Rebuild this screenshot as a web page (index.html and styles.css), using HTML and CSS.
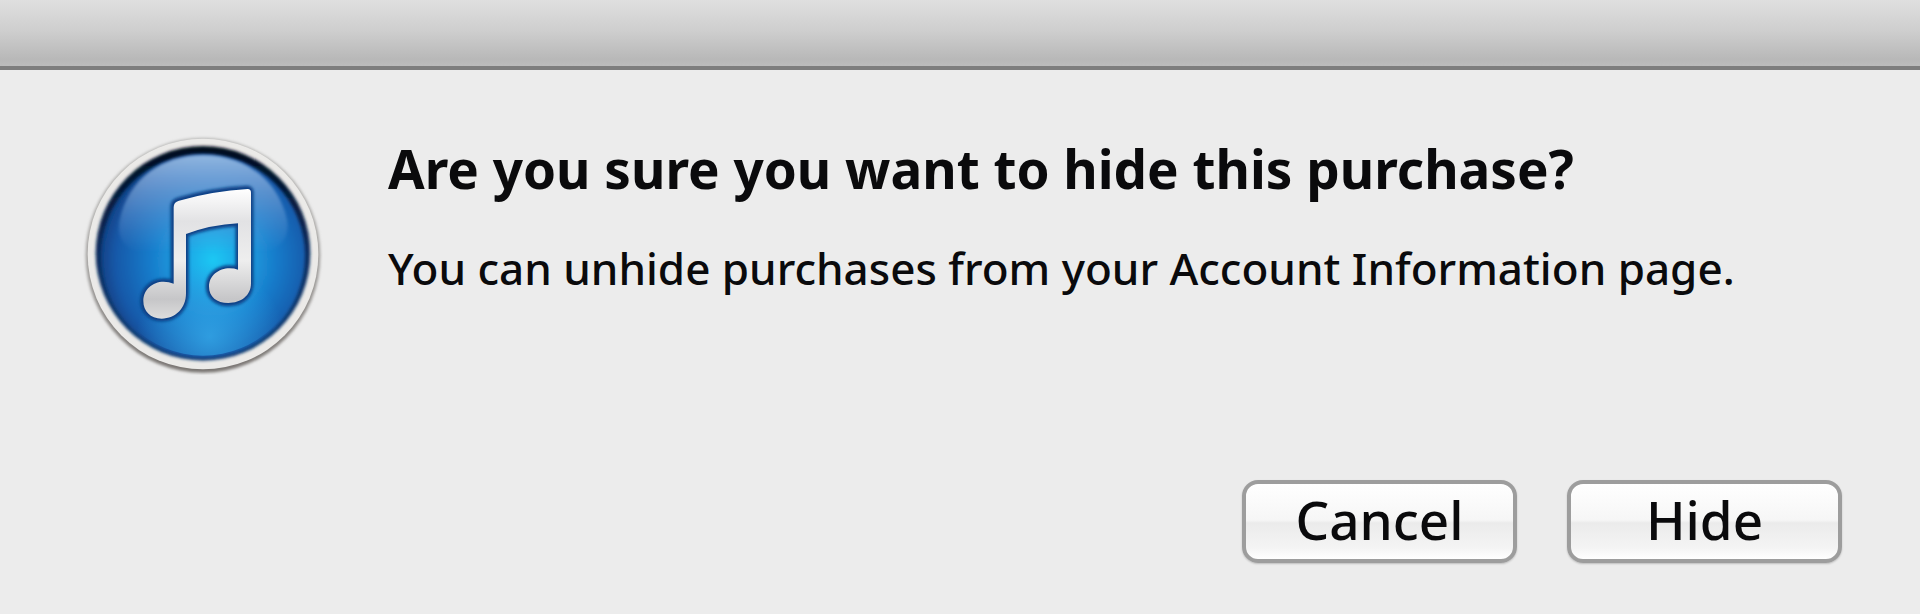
FILE: index.html
```
<!DOCTYPE html>
<html lang="en">
<head>
    <meta charset="UTF-8">
    <meta name="viewport" content="width=device-width, initial-scale=1.0">
    <title>Hide purchase</title>
    <link rel="stylesheet" href="styles.css">
</head>
<body>
    <header class="titlebar"></header>

    <main class="dialog">
        <div class="message">
            <svg class="app-icon" viewBox="40 45 720 720" aria-hidden="true">
                <defs>
                    <linearGradient id="rim" x1="0" y1="0" x2="0" y2="1">
                        <stop offset="0" stop-color="#b4b4b2"/>
                        <stop offset="0.5" stop-color="#a3a19f"/>
                        <stop offset="1" stop-color="#777370"/>
                    </linearGradient>
                    <radialGradient id="disc" cx="430" cy="420" r="345" gradientUnits="userSpaceOnUse">
                        <stop offset="0" stop-color="#1fc8f4"/>
                        <stop offset="0.25" stop-color="#1ea5e4"/>
                        <stop offset="0.55" stop-color="#187bca"/>
                        <stop offset="0.85" stop-color="#1658a8"/>
                        <stop offset="1" stop-color="#0f3e80"/>
                    </radialGradient>
                    <radialGradient id="glow" cx="420" cy="650" r="220" gradientUnits="userSpaceOnUse">
                        <stop offset="0" stop-color="#35a8e8" stop-opacity="0.8"/>
                        <stop offset="1" stop-color="#35a8e8" stop-opacity="0"/>
                    </radialGradient>
                    <linearGradient id="edge" x1="0" y1="0" x2="0" y2="1">
                        <stop offset="0" stop-color="#020b1c"/>
                        <stop offset="0.5" stop-color="#0b2d60"/>
                        <stop offset="1" stop-color="#123f75"/>
                    </linearGradient>
                    <linearGradient id="gloss" x1="0" y1="0" x2="0" y2="1">
                        <stop offset="0" stop-color="#a5c8ec" stop-opacity="0.85"/>
                        <stop offset="0.3" stop-color="#86aede" stop-opacity="0.7"/>
                        <stop offset="1" stop-color="#6fa5e0" stop-opacity="0"/>
                    </linearGradient>
                    <linearGradient id="note" x1="0" y1="0" x2="0" y2="1">
                        <stop offset="0" stop-color="#ffffff"/>
                        <stop offset="0.25" stop-color="#e2e2e4"/>
                        <stop offset="0.55" stop-color="#eeeeee"/>
                        <stop offset="0.85" stop-color="#c6c6c8"/>
                        <stop offset="1" stop-color="#dddddd"/>
                    </linearGradient>
                    <filter id="soft" x="-10%" y="-10%" width="120%" height="120%">
                        <feGaussianBlur stdDeviation="5"/>
                    </filter>
                </defs>
                <circle cx="400" cy="406" r="352" fill="url(#rim)" filter="url(#soft)"/>
                <circle cx="400" cy="402" r="346" fill="#ebeae8"/>
                <circle cx="400" cy="400" r="322" fill="url(#edge)" filter="url(#soft)"/>
                <circle cx="400" cy="407" r="306" fill="url(#disc)" filter="url(#soft)"/>
                <circle cx="400" cy="407" r="300" fill="url(#glow)"/>
                <path d="M150 300 C175 175 280 105 400 105 C520 105 625 175 652 300 C660 345 640 380 590 395 L200 395 C155 375 142 345 150 300 Z" fill="url(#gloss)" filter="url(#soft)"/>
                <path d="M308 258 Q309 242 326 238 Q430 208 532 203 Q546 203 546 218 L546 490 C546 530 515 553 476 553 C440 553 414 532 414 500 C414 463 445 441 480 441 Q492 441 503 444 L503 314 Q425 318 352 344 L352 520 C352 568 319 599 276 599 C240 599 217 574 217 543 C217 506 246 481 282 481 Q296 481 308 485 Z" fill="#0b4186" stroke="#0b4186" stroke-width="11" filter="url(#soft)"/>
                <path d="M312 262 Q312 246 328 242 Q430 213 534 207 Q544 207 544 218 L544 490 C544 527 514 549 476 549 C441 549 418 530 418 500 C418 467 447 445 480 445 Q494 445 505 449 L505 310 Q425 314 349 342 L349 520 C349 565 318 596 276 596 C242 596 221 573 221 543 C221 509 248 485 282 485 Q298 485 312 491 Z" fill="url(#note)"/>
            </svg>
            <div class="text">
                <h1>Are you sure you want to hide this purchase?</h1>
                <p>You can unhide purchases from your Account Information page.</p>
            </div>
        </div>

        <div class="buttons">
            <button type="button">Cancel</button>
            <button type="button">Hide</button>
        </div>
    </main>
</body>
</html>
```
FILE: styles.css
```
* {
    box-sizing: border-box;
}

body {
    margin: 0;
    min-height: 100vh;
    background-color: #ececec;
    color: #0a0a0c;
    font-family: "Noto Sans", "Open Sans", sans-serif;
}

.titlebar {
    height: 70px;
    background: linear-gradient(#dfdfdf, #cfcfcf 45%, #b8b8b8 90%, #bcbcbc);
    border-bottom: 4px solid #7e7e7e;
}

.dialog {
    padding: 65px 78px 40px 83px;
}

.message {
    display: flex;
    align-items: flex-start;
    gap: 65px;
}

.app-icon {
    flex: none;
    width: 240px;
    height: 240px;
}

h1 {
    margin: 0;
    font-size: 53px;
    line-height: 68px;
    font-weight: bold;
}

p {
    margin: 30px 0 0;
    font-size: 44px;
    line-height: 70px;
    font-weight: 500;
}

.buttons {
    display: flex;
    justify-content: flex-end;
    gap: 50px;
    margin-top: 105px;
}

button {
    width: 275px;
    height: 83px;
    padding: 0 0 4px;
    border: 4px solid #9d9d9d;
    border-radius: 16px;
    background: linear-gradient(#ffffff, #f6f6f6 48%, #ebebeb 52%, #f4f4f4 85%, #ffffff);
    box-shadow: 0 1px 2px rgba(0, 0, 0, 0.2);
    color: #0a0a0c;
    font-family: inherit;
    font-size: 53px;
    line-height: 70px;
    font-weight: 500;
}

button:active {
    background: #d8d8d8;
}
```
